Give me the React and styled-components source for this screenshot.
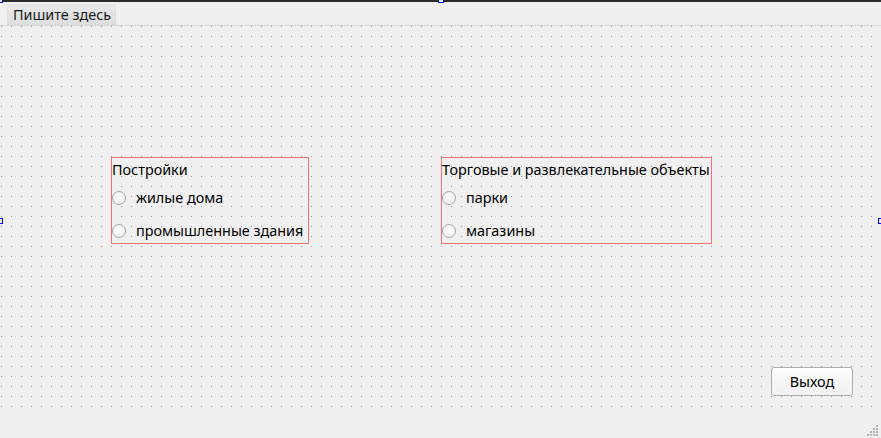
import React from "react";
import styled, { createGlobalStyle } from "styled-components";

const Global = createGlobalStyle`
  html, body { margin: 0; padding: 0; background: #f0f0f0; overflow: hidden; }
  body { font-family: "Noto Sans", "Liberation Sans", sans-serif; }
`;

const Form = styled.div`
  position: relative;
  width: 881px;
  height: 438px;
  box-sizing: border-box;
  border-top: 2px solid #2b2b2b;
  background: #f0f0f0;
  display: flex;
  flex-direction: column;
  font-family: "Noto Sans", "Liberation Sans", sans-serif;
  font-size: 14.4px;
  color: #000;
`;

const MenuBar = styled.div`
  height: 23px;
  border-bottom: 1px solid #d6d6d6;
  display: flex;
  align-items: flex-end;
  padding-left: 7px;
  box-sizing: content-box;
`;

const MenuItem = styled.div`
  height: 21px;
  padding: 0 5px 0 6px;
  display: flex;
  align-items: center;
  background: linear-gradient(#e9e9e9, #dedede);
  box-shadow: inset 0 0 2px rgba(0,0,0,0.06);
  color: #1a1a1a;
  font-size: 14.4px;
  line-height: 21px;
`;

const Canvas = styled.div`
  height: 386px;
  display: flex;
  flex-direction: column;
  background-color: #f0f0f0;
  background-image: conic-gradient(from 270deg at 1px 1px, #999999 25%, transparent 0);
  background-size: 10px 10px;
  background-position: 1px 0;
`;

const GroupRow = styled.div`
  display: flex;
  gap: 132px;
  padding-left: 111px;
  margin-top: 131px;
`;

const Group = styled.div`
  width: ${(p) => p.$w}px;
  height: 87px;
  box-sizing: border-box;
  border: 1px solid #ff7070;
  display: flex;
  flex-direction: column;
`;

const Label = styled.div`
  height: 23px;
  line-height: 23px;
  flex-shrink: 0;
  white-space: nowrap;
`;

const RadioRow = styled.label`
  height: 33px;
  flex-shrink: 0;
  display: flex;
  align-items: center;
  white-space: nowrap;
`;

const RadioCircle = styled.span`
  width: 14px;
  height: 14px;
  box-sizing: border-box;
  border-radius: 50%;
  border: 1px solid #a8a8a8;
  background: radial-gradient(circle at 50% 40%, #fbfbfb, #ececec);
  margin-right: 10px;
  flex-shrink: 0;
`;

const ButtonRow = styled.div`
  display: flex;
  justify-content: flex-end;
  padding-right: 28px;
  margin-top: 123px;
`;

const Button = styled.button`
  width: 82px;
  height: 29px;
  box-sizing: border-box;
  border: 1px solid #adadad;
  border-radius: 3px;
  background: linear-gradient(#fdfdfd, #f1f1f1);
  font-family: inherit;
  font-size: 14.4px;
  color: #000;
  padding: 0;
`;

const StatusBar = styled.div`
  flex: 1;
  display: flex;
  justify-content: flex-end;
  align-items: flex-end;
  padding: 0 2px 1px 0;
`;

const Handle = styled.div`
  position: absolute;
  width: 6px;
  height: 6px;
  box-sizing: border-box;
  border: 1px solid #0000ff;
  background: #f4f4f4;
  left: ${(p) => p.$x}px;
  top: ${(p) => p.$y}px;
`;

function Radio({ children }) {
  return (
    <RadioRow>
      <RadioCircle />
      {children}
    </RadioRow>
  );
}

function SizeGrip() {
  const pts = [];
  for (let r = 0; r < 4; r++) {
    for (let c = 3 - r; c < 4; c++) pts.push([c * 3, r * 3]);
  }
  return (
    <svg width="12" height="12" viewBox="0 0 12 12">
      {pts.map(([x, y], i) => (
        <rect key={i} x={x} y={y} width="2" height="2" fill="#b4b4b4" />
      ))}
    </svg>
  );
}

export default function App() {
  return (
    <>
      <Global />
      <Form>
        <MenuBar>
          <MenuItem>Пишите здесь</MenuItem>
        </MenuBar>
        <Canvas>
          <GroupRow>
            <Group $w={198}>
              <Label>Постройки</Label>
              <Radio>жилые дома</Radio>
              <Radio>промышленные здания</Radio>
            </Group>
            <Group $w={271}>
              <Label>Торговые и развлекательные объекты</Label>
              <Radio>парки</Radio>
              <Radio>магазины</Radio>
            </Group>
          </GroupRow>
          <ButtonRow>
            <Button>Выход</Button>
          </ButtonRow>
        </Canvas>
        <StatusBar>
          <SizeGrip />
        </StatusBar>
        <Handle $x={-3} $y={-5} />
        <Handle $x={438} $y={-5} />
        <Handle $x={-3} $y={216} />
        <Handle $x={878} $y={216} />
      </Form>
    </>
  );
}
